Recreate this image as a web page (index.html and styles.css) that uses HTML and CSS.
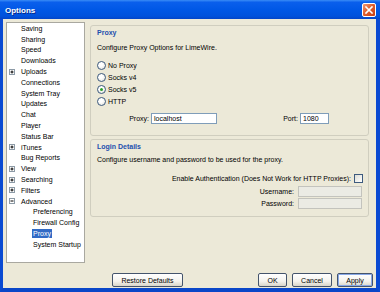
FILE: index.html
```html
<!DOCTYPE html>
<html lang="en">
<head>
    <meta charset="UTF-8">
    <title>Options</title>
    <link rel="stylesheet" href="styles.css">
</head>
<body>

<div class="window">
    <div class="titlebar">
        <span class="title">Options</span>
        <span class="close">
            <svg width="12" height="12" viewBox="0 0 12 12"><path d="M3 3 L9 9 M9 3 L3 9" stroke="#fff" stroke-width="1.6" stroke-linecap="square"/></svg>
        </span>
    </div>

    <div class="client">
        <div class="main">
            <!-- left side navigation tree -->
            <div class="tree">
                <div class="row"><span class="tw"></span>Saving</div>
                <div class="row"><span class="tw"></span>Sharing</div>
                <div class="row"><span class="tw"></span>Speed</div>
                <div class="row"><span class="tw"></span>Downloads</div>
                <div class="row"><span class="tw"><svg class="tgl" width="6" height="6" viewBox="0 0 6 6"><rect x="0.5" y="0.5" width="5" height="5" fill="#fff" stroke="#8c9aa6"/><path d="M1.5 3 H4.5 M3 1.5 V4.5" stroke="#000"/></svg></span>Uploads</div>
                <div class="row"><span class="tw"></span>Connections</div>
                <div class="row"><span class="tw"></span>System Tray</div>
                <div class="row"><span class="tw"></span>Updates</div>
                <div class="row"><span class="tw"></span>Chat</div>
                <div class="row"><span class="tw"></span>Player</div>
                <div class="row"><span class="tw"></span>Status Bar</div>
                <div class="row"><span class="tw"><svg class="tgl" width="6" height="6" viewBox="0 0 6 6"><rect x="0.5" y="0.5" width="5" height="5" fill="#fff" stroke="#8c9aa6"/><path d="M1.5 3 H4.5 M3 1.5 V4.5" stroke="#000"/></svg></span>iTunes</div>
                <div class="row"><span class="tw"></span>Bug Reports</div>
                <div class="row"><span class="tw"><svg class="tgl" width="6" height="6" viewBox="0 0 6 6"><rect x="0.5" y="0.5" width="5" height="5" fill="#fff" stroke="#8c9aa6"/><path d="M1.5 3 H4.5 M3 1.5 V4.5" stroke="#000"/></svg></span>View</div>
                <div class="row"><span class="tw"><svg class="tgl" width="6" height="6" viewBox="0 0 6 6"><rect x="0.5" y="0.5" width="5" height="5" fill="#fff" stroke="#8c9aa6"/><path d="M1.5 3 H4.5 M3 1.5 V4.5" stroke="#000"/></svg></span>Searching</div>
                <div class="row"><span class="tw"><svg class="tgl" width="6" height="6" viewBox="0 0 6 6"><rect x="0.5" y="0.5" width="5" height="5" fill="#fff" stroke="#8c9aa6"/><path d="M1.5 3 H4.5 M3 1.5 V4.5" stroke="#000"/></svg></span>Filters</div>
                <div class="row"><span class="tw"><svg class="tgl" width="6" height="6" viewBox="0 0 6 6"><rect x="0.5" y="0.5" width="5" height="5" fill="#fff" stroke="#8c9aa6"/><path d="M1.5 3 H4.5" stroke="#000"/></svg></span>Advanced</div>
                <div class="row child"><span class="tw"></span>Preferencing</div>
                <div class="row child"><span class="tw"></span>Firewall Config</div>
                <div class="row child"><span class="tw"></span><span class="selected">Proxy</span></div>
                <div class="row child"><span class="tw"></span>System Startup</div>
            </div>

            <div class="panel">
                <div class="group proxy-group">
                    <div class="group-title">Proxy</div>
                    <div class="desc">Configure Proxy Options for LimeWire.</div>

                    <div class="radios">
                        <div class="radio-row"><span class="radio"></span>No Proxy</div>
                        <div class="radio-row"><span class="radio"></span>Socks v4</div>
                        <div class="radio-row"><span class="radio checked"></span>Socks v5</div>
                        <div class="radio-row"><span class="radio"></span>HTTP</div>
                    </div>

                    <div class="host-row">
                        <span class="host-label">Proxy:</span>
                        <span class="field host-field">localhost</span>
                        <span class="port-label">Port:</span>
                        <span class="field port-field">1080</span>
                    </div>
                </div>

                <div class="group login-group">
                    <div class="group-title">Login Details</div>
                    <div class="desc">Configure username and password to be used for the proxy.</div>

                    <div class="auth-row">
                        <span>Enable Authentication (Does Not Work for HTTP Proxies):</span>
                        <span class="checkbox"></span>
                    </div>
                    <div class="cred-row first">
                        <span class="cred-label">Username:</span>
                        <span class="field disabled"></span>
                    </div>
                    <div class="cred-row">
                        <span class="cred-label">Password:</span>
                        <span class="field disabled"></span>
                    </div>
                </div>
            </div>
        </div>

        <div class="buttons">
            <span class="btn restore">Restore Defaults</span>
            <span class="btn ok">OK</span>
            <span class="btn cancel">Cancel</span>
            <span class="btn apply">Apply</span>
        </div>
    </div>
</div>

</body>
</html>
```

FILE: styles.css
```css
    body {
        margin: 0;
        font-family: "Liberation Sans", Arial, sans-serif;
        font-size: 7px;
        color: #000;
        background-color: #fff;
    }

    .window {
        width: 380px;
        height: 292px;
        display: flex;
        flex-direction: column;
    }

    .titlebar {
        height: 19px;
        display: flex;
        align-items: center;
        justify-content: space-between;
        padding: 0 4px 0 5px;
        background: linear-gradient(#3a8cf6 0%, #0a5fec 12%, #0058e6 50%, #0052dc 85%, #0345c8 100%);
    }

    .title {
        color: #fff;
        font-weight: bold;
        font-size: 8px;
        text-shadow: 1px 1px 0 #0b2a8a;
        padding-top: 1px;
    }

    .close {
        width: 12px;
        height: 12px;
        border: 1px solid #fff;
        border-radius: 2px;
        background: linear-gradient(135deg, #f29a77 0%, #e0602f 45%, #c63d12 100%);
        display: flex;
        margin-top: 1px;
    }

    .client {
        flex: 1;
        background-color: #ece9d8;
        border-left: 3px solid #0a4ad2;
        border-right: 4px solid #0a4ad2;
        border-bottom: 4px solid #0a46c8;
        padding: 3px 7px 1px 3px;
        display: flex;
        flex-direction: column;
    }

    .main {
        display: flex;
        gap: 5px;
        height: 241px;
    }

    /* tree */
    .tree {
        width: 77px;
        background-color: #fff;
        border: 1px solid #a9a8a0;
    }

    .row {
        height: 10.8px;
        display: flex;
        align-items: center;
        white-space: nowrap;
    }

    .row.child {
        padding-left: 12px;
    }

    .tw {
        width: 14px;
        flex-shrink: 0;
        display: flex;
        align-items: center;
    }

    .tgl {
        margin-left: 2px;
    }

    .selected {
        background-color: #316ac5;
        color: #fff;
        padding: 1px 1.5px;
        margin-left: -1.5px;
    }

    /* right panel */
    .panel {
        width: 279px;
    }

    .group {
        border: 1px solid #d0cebf;
        border-radius: 3px;
        padding: 3px 6px 0 6px;
    }

    .proxy-group {
        margin-top: 3px;
        padding-bottom: 11px;
    }

    .login-group {
        margin-top: 3px;
        padding-bottom: 7px;
    }

    .group-title {
        color: #1d4fae;
        font-weight: bold;
        line-height: 7px;
    }

    .desc {
        line-height: 10px;
        margin-top: 7px;
    }

    .login-group .desc {
        margin-top: 5px;
    }

    .radios {
        margin-top: 6px;
    }

    .radio-row {
        height: 12px;
        display: flex;
        align-items: center;
    }

    .radio {
        width: 7px;
        height: 7px;
        border: 1px solid #3d5a7e;
        border-radius: 50%;
        background: radial-gradient(circle at 40% 35%, #fff 30%, #dcdcd4 100%);
        margin-right: 2px;
        position: relative;
    }

    .radio.checked::after {
        content: "";
        position: absolute;
        left: 2px;
        top: 2px;
        width: 3px;
        height: 3px;
        border-radius: 50%;
        background-color: #2aa02a;
    }

    .host-row {
        margin-top: 5px;
        height: 12px;
        display: flex;
        align-items: center;
    }

    .host-label {
        width: 52px;
        text-align: right;
        margin-right: 2px;
    }

    .port-label {
        width: 81px;
        text-align: right;
        margin-right: 2px;
    }

    .field {
        height: 11px;
        box-sizing: border-box;
        border: 1px solid #7f9db9;
        background-color: #fff;
        padding-left: 2px;
        line-height: 9px;
    }

    .host-field {
        width: 66px;
    }

    .port-field {
        width: 29px;
    }

    .field.disabled {
        width: 64px;
        background-color: #ebebe4;
        border-color: #c3c3bd;
    }

    .auth-row {
        margin-top: 7px;
        height: 12px;
        display: flex;
        align-items: center;
        justify-content: flex-end;
    }

    .checkbox {
        width: 7px;
        height: 7px;
        border: 1px solid #3d5a7e;
        background: linear-gradient(135deg, #dcdcd4, #fff);
        margin-left: 3px;
        margin-right: -1px;
    }

    .cred-row {
        height: 12px;
        display: flex;
        align-items: center;
        justify-content: flex-end;
    }

    .cred-row.first {
        margin-top: 1px;
    }

    .cred-label {
        margin-right: 4px;
    }

    /* bottom buttons */
    .buttons {
        margin-top: 10px;
        margin-right: -4px;
        padding-left: 106px;
        height: 14px;
        display: flex;
        gap: 5px;
    }

    .btn {
        box-sizing: border-box;
        height: 14px;
        border: 1px solid #44546c;
        border-radius: 2px;
        background: linear-gradient(#ffffff 0%, #f4f3ee 60%, #d9d5c8 100%);
        display: flex;
        align-items: center;
        justify-content: center;
    }

    .restore {
        width: 71px;
    }

    .ok {
        width: 29px;
        margin-left: auto;
    }

    .cancel {
        width: 40px;
    }

    .apply {
        width: 36px;
        box-shadow: inset 0 0 0 1px #88a8e6;
    }
```
